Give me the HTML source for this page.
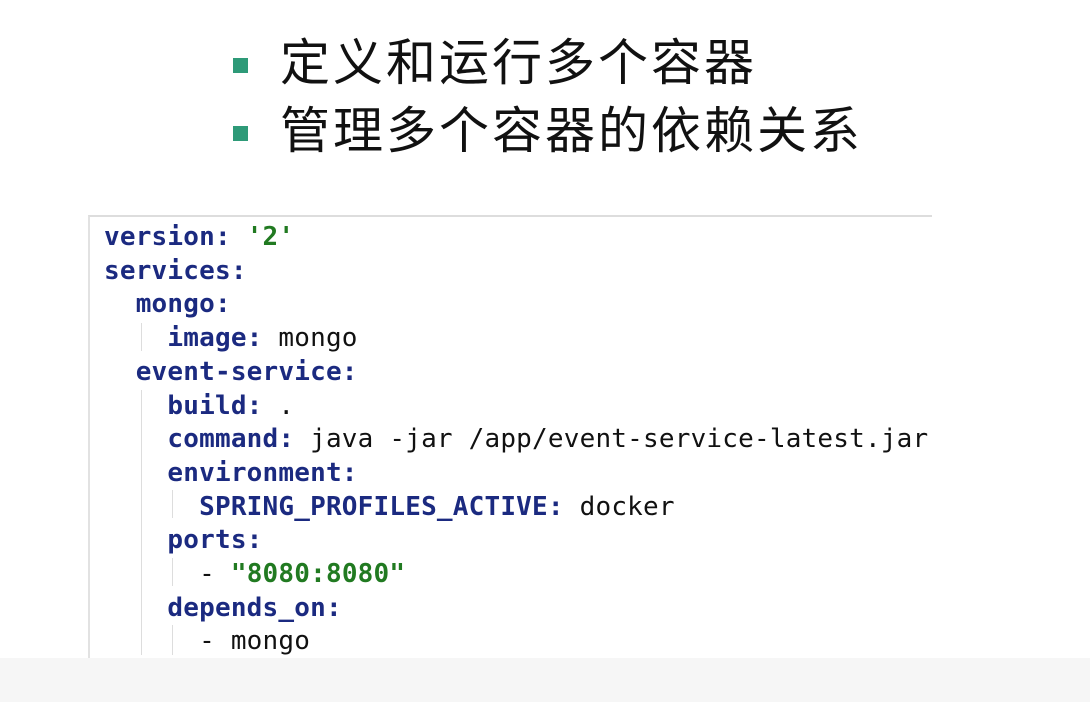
<!DOCTYPE html>
<html><head><meta charset="utf-8"><style>
body{margin:0;width:1090px;height:702px;background:#fff;position:relative;overflow:hidden}
.b{position:absolute;left:233px;width:15px;height:15px;background:#2e9a78}
.t{position:absolute;left:280px;font:50px/1 "Liberation Sans","Noto Sans CJK SC",sans-serif;color:#111;letter-spacing:3px}
.box{position:absolute;left:88px;top:215px;width:842px;height:442px;border-top:2px solid #ddd;border-left:2px solid #e2e2e2}
.code{position:absolute;left:104px;top:221px;font:bold 26px/33.7px "DejaVu Sans Mono","Liberation Mono",monospace;white-space:pre;color:#1b2a80;letter-spacing:0.2px}
.s{color:#217a21}.p{color:#111;font-weight:normal}
.bot{position:absolute;left:0;top:658px;width:1090px;height:44px;background:#f6f6f6}
.g{position:absolute;width:1px;background:#ddd}
</style></head><body>
<div class="b" style="top:58px"></div><div class="t" style="top:38px">定义和运行多个容器</div>
<div class="b" style="top:126px"></div><div class="t" style="top:106px">管理多个容器的依赖关系</div>
<div class="box"></div>
<div class="g" style="left:141px;top:323px;height:28px"></div>
<div class="g" style="left:141px;top:390px;height:265px"></div>
<div class="g" style="left:172px;top:490px;height:28px"></div>
<div class="g" style="left:172px;top:558px;height:28px"></div>
<div class="g" style="left:172px;top:625px;height:30px"></div>
<div class="code">version: <span class="s">'2'</span>
services:
  mongo:
    image: <span class="p">mongo</span>
  event-service:
    build: <span class="p">.</span>
    command: <span class="p">java -jar /app/event-service-latest.jar</span>
    environment:
      SPRING_PROFILES_ACTIVE: <span class="p">docker</span>
    ports:
      <span class="p">-</span> <span class="s">"8080:8080"</span>
    depends_on:
      <span class="p">- mongo</span></div>
<div class="bot"></div>
</body></html>
